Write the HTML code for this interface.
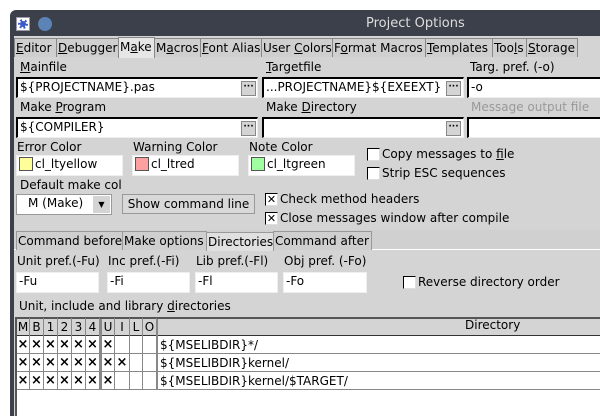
<!DOCTYPE html>
<html style="overflow:hidden;width:600px;height:416px"><head><style>
*{box-sizing:border-box;margin:0;padding:0}
body{width:600px;height:416px;background:#fff;position:relative;overflow:hidden;font-family:"DejaVu Sans","Liberation Sans",sans-serif;font-size:12px;color:#000}
div{white-space:nowrap}
.a{position:absolute}
#win{position:absolute;left:10px;top:10px;width:590px;height:406px;background:#3b404a;border-top-left-radius:6px}
#client{position:absolute;left:14px;top:36px;width:586px;height:380px;background:#d4d4d4}
.tab{position:absolute;top:38px;height:19px;border:1px solid #888;border-bottom:none;background:#cfcfcf;padding:0 1px;line-height:18px;overflow:hidden}
.tab.sel{top:37px;height:21px;background:#e6e6e6}
.inp{position:absolute;height:21px;background:#fff;border:1px solid #000;border-left:2px solid #000;border-top:2px solid #000;border-right-color:#eee;border-bottom-color:#eee;padding:0 2px;line-height:17px;overflow:hidden}
.btn{position:absolute;width:15px;height:15px;background:#d4d4d4;border:1px solid #888;font-size:9px;line-height:10px;text-align:center;font-weight:bold}
.lab{position:absolute;line-height:14px}
.cb{position:absolute;width:13px;height:13px;background:#fff;border:1px solid #000;border-right-color:#ddd;border-bottom-color:#ddd;font-size:11px;line-height:11px;text-align:center;font-weight:bold}
.sw{display:inline-block;width:14px;height:14px;border:1px solid #555;vertical-align:-3px;margin-right:2px}
.it{position:absolute;top:231px;height:19px;border:1px solid #999;border-bottom:none;background:#cfcfcf;padding:0 1px;line-height:18px;overflow:hidden}
u{text-decoration:underline}
.g{position:absolute;border-right:1px solid #888;text-align:center;height:18px;line-height:18px}
.x{font-weight:bold;font-size:13px}
</style></head><body>
<div id="win"></div>
<div class="a" style="left:16px;top:17px;width:14px;height:14px;background:#fff;border:1px solid #99a"><div style="margin:1px;width:10px;height:10px;border-radius:50%;background:#3b5bc9;border:2px dotted #fff"></div></div>
<div class="a" style="left:38px;top:17px;width:14px;height:14px;border-radius:50%;background:#5b83b6"></div>
<div class="a" style="left:366px;top:16px;color:#ddd;font-size:13px">Project Options</div>
<div id="client"></div>
<div class="tab" style="left:14px;width:43px"><u>E</u>ditor</div>
<div class="tab" style="left:56px;width:63px"><u>D</u>ebugger</div>
<div class="tab sel" style="left:118px;width:37px">M<u>a</u>ke</div>
<div class="tab" style="left:154px;width:47px">M<u>a</u>cros</div>
<div class="tab" style="left:200px;width:62px"><u>F</u>ont Alias</div>
<div class="tab" style="left:261px;width:72px">User <u>C</u>olors</div>
<div class="tab" style="left:332px;width:94px">F<u>o</u>rmat Macros</div>
<div class="tab" style="left:425px;width:68px"><u>T</u>emplates</div>
<div class="tab" style="left:492px;width:35px">Too<u>l</u>s</div>
<div class="tab" style="left:526px;width:52px"><u>S</u>torage</div>

<div class="lab" style="left:20px;top:60px"><u>M</u>ainfile</div>
<div class="lab" style="left:266px;top:60px"><u>T</u>argetfile</div>
<div class="lab" style="left:470px;top:60px">Targ. pref. (-o)</div>
<div class="inp" style="left:16px;top:77px;width:242px">${PROJECTNAME}.pas</div>
<div class="btn" style="left:241px;top:81px">···</div>
<div class="inp" style="left:262px;top:77px;width:202px">...PROJECTNAME}${EXEEXT}</div>
<div class="btn" style="left:446px;top:81px">···</div>
<div class="inp" style="left:467px;top:77px;width:140px">-o</div>

<div class="lab" style="left:20px;top:100px">Make <u>P</u>rogram</div>
<div class="lab" style="left:266px;top:100px">Make <u>D</u>irectory</div>
<div class="lab" style="left:471px;top:100px;color:#999">Message output file</div>
<div class="inp" style="left:16px;top:117px;width:242px">${COMPILER}</div>
<div class="btn" style="left:241px;top:121px">···</div>
<div class="inp" style="left:262px;top:117px;width:202px"></div>
<div class="btn" style="left:446px;top:121px">···</div>
<div class="inp" style="left:467px;top:117px;width:140px"></div>

<div class="lab" style="left:17px;top:140px">Error Color</div>
<div class="lab" style="left:133px;top:140px">Warning Color</div>
<div class="lab" style="left:249px;top:140px">Note Color</div>
<div class="inp" style="left:16px;top:155px;width:107px;border-color:#eee;border-width:1px"><span class="sw" style="background:#ffff99"></span>cl_ltyellow</div>
<div class="inp" style="left:132px;top:155px;width:107px;border-color:#eee;border-width:1px"><span class="sw" style="background:#ffa0a0"></span>cl_ltred</div>
<div class="inp" style="left:248px;top:155px;width:107px;border-color:#eee;border-width:1px"><span class="sw" style="background:#a0ffa0"></span>cl_ltgreen</div>
<div class="cb" style="left:367px;top:148px"></div><div class="lab" style="left:382px;top:147px">Copy messages to <u>f</u>ile</div>
<div class="cb" style="left:367px;top:167px"></div><div class="lab" style="left:382px;top:166px">Strip ESC sequences</div>

<div class="lab" style="left:20px;top:178px">Default make col</div>
<div class="inp" style="left:16px;top:194px;width:96px;border-color:#999;border-width:1px;padding-left:11px">M (Make)<div style="position:absolute;right:1px;top:1px;width:17px;height:17px;background:#d4d4d4;font-size:8px;text-align:center;line-height:17px">▼</div></div>
<div class="a" style="left:122px;top:194px;width:133px;height:20px;border:1px solid #999;background:#d8d8d8;text-align:center;line-height:18px">Show command line</div>
<div class="cb" style="left:265px;top:193px">✕</div><div class="lab" style="left:280px;top:192px">Check method headers</div>
<div class="cb" style="left:265px;top:212px">✕</div><div class="lab" style="left:280px;top:211px">Close messages window after compile</div>

<div class="a" style="left:14px;top:230px;width:586px;height:20px;background:#d0d0d0;border-bottom:1px solid #fff"></div>
<div class="it" style="left:16px;width:107px">Command before</div>
<div class="it" style="left:122px;width:85px">Make options</div>
<div class="it" style="left:206px;width:68px;background:#e0e0e0;top:232px">Directories</div>
<div class="it" style="left:273px;width:99px">Command after</div>

<div class="lab" style="left:17px;top:254px">Unit pref.(-Fu)</div>
<div class="lab" style="left:108px;top:254px">Inc pref.(-Fi)</div>
<div class="lab" style="left:196px;top:254px">Lib pref.(-Fl)</div>
<div class="lab" style="left:284px;top:254px">Obj pref. (-Fo)</div>
<div class="inp" style="left:16px;top:272px;width:83px;border-color:#eee;border-width:1px">-Fu</div>
<div class="inp" style="left:107px;top:272px;width:83px;border-color:#eee;border-width:1px">-Fi</div>
<div class="inp" style="left:195px;top:272px;width:83px;border-color:#eee;border-width:1px">-Fl</div>
<div class="inp" style="left:283px;top:272px;width:84px;border-color:#eee;border-width:1px">-Fo</div>
<div class="cb" style="left:403px;top:276px"></div><div class="lab" style="left:418px;top:275px">Reverse directory order</div>

<div class="lab" style="left:19px;top:299px">Unit, include and library <u>d</u>irectories</div>
<div class="a" style="left:15px;top:317px;width:585px;height:99px;background:#fff;border-top:2px solid #555;border-left:2px solid #555"></div>
<div class="a" style="left:17px;top:319px;width:583px;height:17px;background:#d4d4d4;border-bottom:1px solid #333"></div>
<div class="a" style="left:17px;top:353px;width:583px;border-top:1px solid #888"></div>
<div class="a" style="left:17px;top:371px;width:583px;border-top:1px solid #888"></div>
<div class="a" style="left:17px;top:389px;width:583px;border-top:1px solid #888"></div>
<div class="a" style="left:157px;top:319px;width:1px;height:71px;background:#888"></div>
<div class="a" style="left:100px;top:319px;width:2px;height:71px;background:#888"></div>
<div class="a" style="left:465px;top:318px">Directory</div>
<div id="grid"></div>
<div class="a" style="left:160px;top:338px">${MSELIBDIR}*/</div>
<div class="a" style="left:160px;top:356px">${MSELIBDIR}kernel/</div>
<div class="a" style="left:160px;top:374px">${MSELIBDIR}kernel/$TARGET/</div>
<script>
var cols=[[17,13,'M'],[30,14,'B'],[44,14,'1'],[58,14,'2'],[72,14,'3'],[86,14,'4'],[102,13,'U'],[115,15,'I'],[130,13,'L'],[143,14,'O']];
var rows=[[1,1,1,1,1,1,1,0,0,0],[1,1,1,1,1,1,1,1,0,0],[1,1,1,1,1,1,1,0,0,0]];
var h='';
cols.forEach(function(c,i){
 h+='<div class="g" style="left:'+c[0]+'px;top:318px;width:'+c[1]+'px">'+c[2]+'</div>';
 rows.forEach(function(r,j){h+='<div class="g x" style="left:'+c[0]+'px;top:'+(336+j*18)+'px;width:'+c[1]+'px">'+(r[i]?'×':'')+'</div>';});
});
document.getElementById('grid').innerHTML=h;
</script>
</body></html>
